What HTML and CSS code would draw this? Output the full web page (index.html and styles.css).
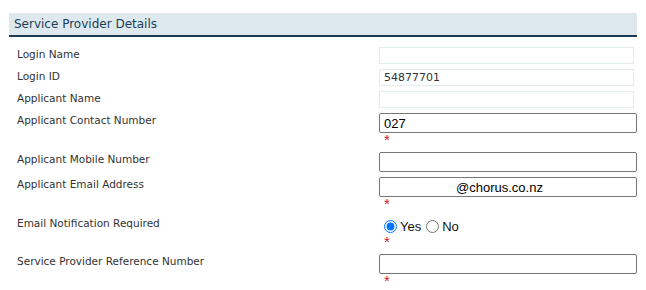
FILE: index.html
```html
<!DOCTYPE html>
<html lang="en">
<head>
<meta charset="utf-8">
<title>Service Provider Details</title>
<link rel="stylesheet" href="styles.css">
</head>
<body>
<div class="panel">
  <div class="panel-head">Service Provider Details</div>
  <div class="form">
    <div class="row">
      <div class="label">Login Name</div>
      <div class="field"><input class="ro" type="text" readonly value=""></div>
    </div>
    <div class="row">
      <div class="label">Login ID</div>
      <div class="field"><input class="ro" type="text" readonly value="54877701"></div>
    </div>
    <div class="row">
      <div class="label">Applicant Name</div>
      <div class="field"><input class="ro" type="text" readonly value=""></div>
    </div>
    <div class="row">
      <div class="label">Applicant Contact Number</div>
      <div class="field"><input class="txt" type="text" value="027"><div class="req">*</div></div>
    </div>
    <div class="row">
      <div class="label">Applicant Mobile Number</div>
      <div class="field"><input class="txt" type="text" value=""></div>
    </div>
    <div class="row">
      <div class="label">Applicant Email Address</div>
      <div class="field"><input class="txt email" type="text" value="@chorus.co.nz"><div class="req">*</div></div>
    </div>
    <div class="row">
      <div class="label">Email Notification Required</div>
      <div class="field">
        <div class="radios">
          <input type="radio" name="notify" id="yes" checked><label for="yes">Yes</label>
          <input type="radio" name="notify" id="no"><label for="no">No</label>
        </div>
        <div class="req">*</div>
      </div>
    </div>
    <div class="row">
      <div class="label">Service Provider Reference Number</div>
      <div class="field"><input class="txt" type="text" value=""><div class="req">*</div></div>
    </div>
  </div>
</div>
</body>
</html>
```
FILE: styles.css
```css
body {
  margin: 0;
  background: #ffffff;
  font-family: "DejaVu Sans", Verdana, sans-serif;
}
.panel {
  margin: 13px 0 0 9px;
  width: 628px;
}
.panel-head {
  height: 22px;
  line-height: 22px;
  background: #dde9ed;
  border-bottom: 2px solid #1e3b56;
  color: #1c3d5a;
  font-size: 12px;
  padding-left: 5px;
}
.form {
  padding-top: 10px;
}
.row {
  display: flex;
  margin-bottom: 5px;
}
.label {
  width: 370px;
  flex: none;
  box-sizing: border-box;
  padding-left: 8px;
  font-size: 10.5px;
  line-height: 14px;
  color: #333333;
}
.field {
  width: 258px;
  flex: none;
}
.ro {
  display: block;
  width: 255px;
  height: 17px;
  box-sizing: border-box;
  border: 1px solid #e2ebee;
  background: #ffffff;
  padding: 0 4px;
  font-family: "DejaVu Sans", Verdana, sans-serif;
  font-size: 11px;
  color: #333333;
  outline: none;
}
.txt {
  display: block;
  width: 258px;
  height: 20px;
  box-sizing: border-box;
  border: 1px solid #767676;
  border-radius: 2px;
  background: #ffffff;
  padding: 0 4px;
  font-family: "Liberation Sans", Arial, sans-serif;
  font-size: 13px;
  color: #000000;
  outline: none;
}
.email {
  text-indent: 72px;
}
.req {
  height: 14px;
  line-height: 14px;
  padding-left: 5px;
  font-family: "Liberation Sans", Arial, sans-serif;
  font-size: 15px;
  color: #d0202e;
}
.radios {
  height: 19px;
  display: flex;
  align-items: center;
  font-family: "Liberation Sans", Arial, sans-serif;
  font-size: 13px;
  color: #111111;
}
.radios input {
  width: 13px;
  height: 13px;
  margin: 2px 3px 0 5px;
}
.radios label {
  padding-top: 2px;
}
```
